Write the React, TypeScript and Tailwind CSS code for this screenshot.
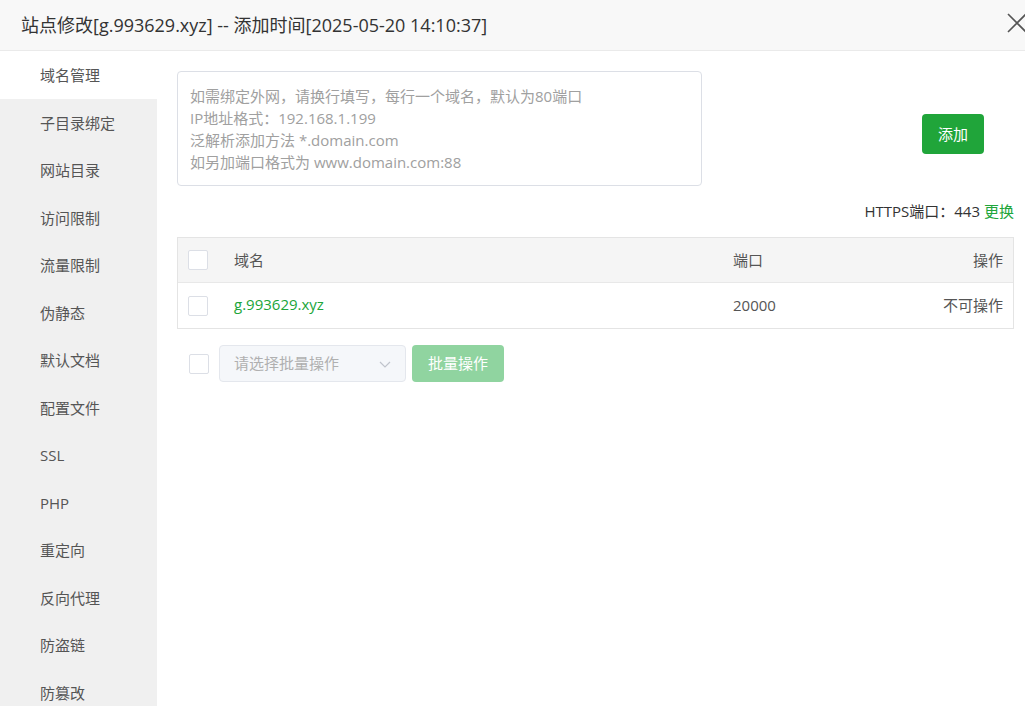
import React from 'react';

const font = { fontFamily: '"Open Sans", "Noto Sans CJK SC", sans-serif' };

const menu = [
  '域名管理',
  '子目录绑定',
  '网站目录',
  '访问限制',
  '流量限制',
  '伪静态',
  '默认文档',
  '配置文件',
  'SSL',
  'PHP',
  '重定向',
  '反向代理',
  '防盗链',
  '防篡改',
];

const Check: React.FC = () => (
  <span className="block w-[20px] h-[20px] rounded-[2px] border border-[#dcdfe6] bg-white" />
);

const App: React.FC = () => {
  return (
    <div className="w-full h-[706px] flex flex-col overflow-hidden bg-white text-[#333]" style={font}>
      <div className="h-[51px] shrink-0 flex items-center justify-between bg-[#f8f8f8] border-b border-[#eaeaea] pl-[21px]">
        <h1 className="text-[18px] text-[#333] font-normal">站点修改[g.993629.xyz] -- 添加时间[2025-05-20 14:10:37]</h1>
        <svg width="22" height="22" viewBox="0 0 22 22" className="mr-[-3px] mt-[-4px]" stroke="#555" strokeWidth="1.6" fill="none">
          <path d="M2 2 L20 20 M20 2 L2 20" />
        </svg>
      </div>

      <div className="flex flex-1 min-h-0">
        <ul className="w-[157px] shrink-0 bg-[#f0f0f0]">
          {menu.map((m, i) => (
            <li
              key={m}
              className={`h-[47.5px] flex items-center pl-[40px] pt-[1px] text-[15px] text-[#555] ${i === 0 ? 'bg-white' : ''}`}
            >
              {m}
            </li>
          ))}
        </ul>

        <main className="flex-1 pl-[20px] pr-[11px] pt-[20px]">
          <div className="flex items-start">
            <div className="w-[525px] h-[115px] border border-[#dcdfe6] rounded-[4px] px-[12px] pt-[13px] text-[15px] leading-[22px] text-[#a0a0a0]">
              <div>如需绑定外网，请换行填写，每行一个域名，默认为80端口</div>
              <div>IP地址格式：192.168.1.199</div>
              <div>泛解析添加方法 *.domain.com</div>
              <div>如另加端口格式为 www.domain.com:88</div>
            </div>
            <button className="ml-auto mr-[30px] mt-[43px] w-[62px] h-[40px] rounded-[4px] bg-[#20a53a] text-white text-[15px]">
              添加
            </button>
          </div>

          <div className="mt-[15px] h-[20px] flex items-center justify-end text-[15px] text-[#333]">
            HTTPS端口：443<span className="ml-[4px] text-[#20a53a]">更换</span>
          </div>

          <div className="mt-[16px] border border-[#e4e4e4] text-[15px]">
            <div className="h-[45px] flex items-center bg-[#f5f5f5] border-b border-[#e8e8e8] text-[#555]">
              <div className="pl-[10px] w-[56px]"><Check /></div>
              <div className="w-[499px]">域名</div>
              <div className="flex-1">端口</div>
              <div className="pr-[10px]">操作</div>
            </div>
            <div className="h-[45px] flex items-center text-[#555]">
              <div className="pl-[10px] w-[56px]"><Check /></div>
              <div className="w-[499px] text-[#20a53a] pb-[3px]">g.993629.xyz</div>
              <div className="flex-1">20000</div>
              <div className="pr-[10px]">不可操作</div>
            </div>
          </div>

          <div className="mt-[16px] flex items-center">
            <div className="ml-[12px] mr-[10px]"><Check /></div>
            <div className="w-[187px] h-[37px] flex items-center justify-between px-[14px] border border-[#e4e7ed] rounded-[4px] bg-[#f5f7fa] text-[15px] text-[#b0b0b0]">
              <span>请选择批量操作</span>
              <svg width="12" height="12" viewBox="0 0 12 12" fill="none" stroke="#c0c4cc" strokeWidth="1.2">
                <path d="M1 4 L6 9 L11 4" />
              </svg>
            </div>
            <button className="ml-[6px] w-[92px] h-[37px] rounded-[4px] bg-[#90d4a0] text-white text-[15px]">
              批量操作
            </button>
          </div>
        </main>
      </div>
    </div>
  );
};

export default App;
